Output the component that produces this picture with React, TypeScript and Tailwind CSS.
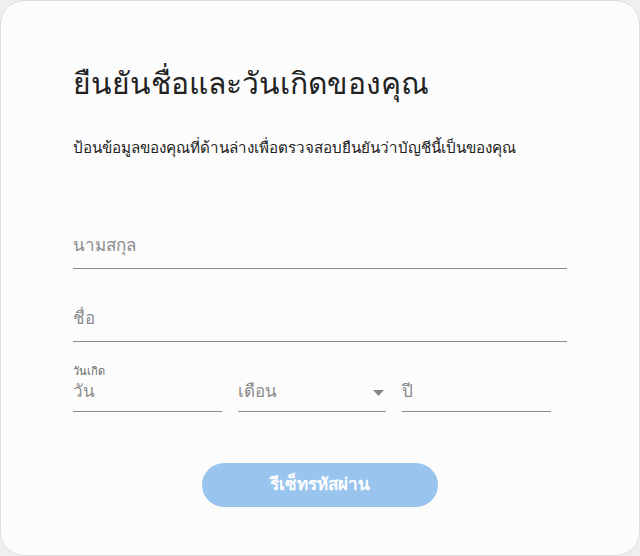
export default function App() {
  return (
    <div className="h-[556px] w-[640px] bg-[#efefef]" style={{ fontFamily: 'Roboto, "Noto Sans", sans-serif' }}>
      <div className="h-full w-full rounded-[24px] border border-[#dcdcdc] bg-[#fcfcfc] px-[72px] pt-[59px]">
        <h1 className="text-[30px] font-medium leading-[48px] text-[#222]">ยืนยันชื่อและวันเกิดของคุณ</h1>
        <p className="mt-[28px] text-[15.2px] leading-[24px] text-[#222]">
          ป้อนข้อมูลของคุณที่ด้านล่างเพื่อตรวจสอบยืนยันว่าบัญชีนี้เป็นของคุณ
        </p>

        <div className="mt-[70px] flex flex-col gap-[34px]">
          <div className="flex h-[39px] items-center border-b border-[#8c8c8c]">
            <span className="mb-[6px] text-[17px] text-[#8a8a8a]">นามสกุล</span>
          </div>
          <div className="flex h-[39px] items-center border-b border-[#8c8c8c]">
            <span className="mb-[6px] text-[17px] text-[#8a8a8a]">ชื่อ</span>
          </div>
        </div>

        <div className="mt-[23px] text-[11px] leading-[14px] text-[#666]">วันเกิด</div>
        <div className="flex w-[478px] gap-[16px]">
          <div className="flex h-[33px] flex-1 items-center border-b border-[#8c8c8c]">
            <span className="mb-[7px] text-[17px] text-[#8a8a8a]">วัน</span>
          </div>
          <div className="flex h-[33px] flex-1 items-center justify-between border-b border-[#8c8c8c]">
            <span className="mb-[7px] text-[17px] text-[#8a8a8a]">เดือน</span>
            <svg width="11" height="6" viewBox="0 0 11 6" className="mb-[5px] mr-[2px]">
              <path d="M0 0h11L5.5 6z" fill="#888" />
            </svg>
          </div>
          <div className="flex h-[33px] flex-1 items-center border-b border-[#8c8c8c]">
            <span className="mb-[7px] text-[17px] text-[#8a8a8a]">ปี</span>
          </div>
        </div>

        <div className="mt-[51px] flex justify-center">
          <button className="h-[44px] w-[236px] rounded-full bg-[#99c4ee] text-[17px] font-bold text-white">
            รีเซ็ทรหัสผ่าน
          </button>
        </div>
      </div>
    </div>
  )
}
